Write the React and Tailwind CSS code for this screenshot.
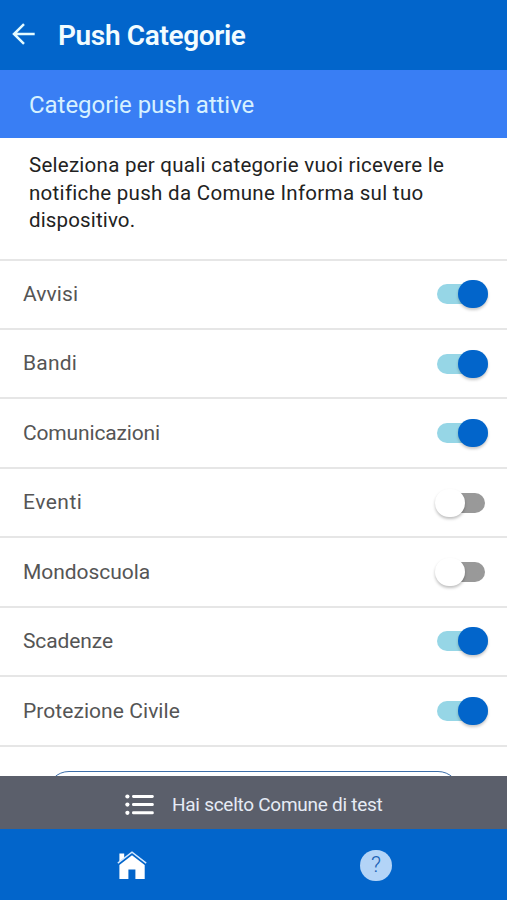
const categories = [
  { name: 'Avvisi', on: true, tracking: 'tracking-[0.1px]' },
  { name: 'Bandi', on: true, tracking: 'tracking-[0.2px]' },
  { name: 'Comunicazioni', on: true, tracking: 'tracking-[-0.15px]' },
  { name: 'Eventi', on: false, tracking: 'tracking-[0.5px]' },
  { name: 'Mondoscuola', on: false, tracking: 'tracking-[-0.05px]' },
  { name: 'Scadenze', on: true, tracking: 'tracking-[-0.1px]' },
  { name: 'Protezione Civile', on: true, tracking: 'tracking-[0.06px]' },
];

function Toggle({ on }) {
  return on ? (
    <span role="switch" aria-checked="true" className="mr-[19px] flex h-5 w-[51px] items-center justify-end rounded-full bg-[#96d6e6]">
      <span className="h-[28px] w-[30px] rounded-full bg-[#0265cb] shadow-[0_2px_3px_rgba(0,0,0,0.22)]" />
    </span>
  ) : (
    <span role="switch" aria-checked="false" className="mr-[22px] flex h-5 w-[50px] items-center rounded-full bg-linear-to-r from-transparent from-40% to-[#999] to-40%">
      <span className="h-[28px] w-[30px] rounded-full bg-white shadow-[0_2px_3px_rgba(0,0,0,0.25)]" />
    </span>
  );
}

function BackArrow() {
  return (
    <svg className="ml-3 h-[22px] w-[24px]" viewBox="0 0 24 22" fill="none" stroke="#e4fbff" strokeWidth="2.5">
      <path d="M12 1.2 2 11l10 9.8M2 11h20.7" />
    </svg>
  );
}

function ListIcon() {
  return (
    <svg className="h-[22px] w-[29px]" viewBox="0 0 29 22" fill="#fff">
      <circle cx="2.4" cy="2.5" r="2.1" />
      <circle cx="2.4" cy="10.6" r="2.1" />
      <circle cx="2.4" cy="18.8" r="2.1" />
      <rect x="7" y="1" width="21.8" height="3" rx="1.4" />
      <rect x="7" y="9.1" width="21.8" height="3" rx="1.4" />
      <rect x="7" y="17.3" width="21.8" height="3" rx="1.4" />
    </svg>
  );
}

function HomeIcon() {
  return (
    <svg className="ml-[117px] h-[29px] w-[30px]" viewBox="0 0 30 29">
      <path fill="#fff" d="M2.4 2.6h4.8v4.2L2.4 10.8zM15 4.2l12.7 9.8V28h-9.3v-9.4h-7V28H2.4V14z" />
      <path fill="none" stroke="#d5e9ff" strokeWidth="1.4" d="M.8 12.1 15 1.2l14.2 10.9" />
    </svg>
  );
}

export default function App() {
  return (
    <div className="flex h-[900px] w-[507px] flex-col overflow-hidden bg-white font-['Roboto','Noto_Sans',sans-serif]">
      <header className="flex h-[70px] shrink-0 items-center bg-[#0265cb] pb-[2px]">
        <BackArrow />
        <h1 className="ml-[22px] pt-[3px] text-[28px] font-semibold leading-none whitespace-nowrap tracking-[-0.36px] text-[#f2fcff]">Push Categorie</h1>
      </header>
      <h2 className="flex h-[68px] shrink-0 items-center bg-[#397ef4] pt-[2px] pl-[29px] text-[24px] whitespace-nowrap tracking-[-0.04px] text-[#d6f1ff]">Categorie push attive</h2>
      <main className="flex h-[638px] shrink-0 flex-col overflow-hidden">
        <p className="h-[120.6px] shrink-0 pt-[14px] pl-[29px] text-[20.5px] leading-[27.5px] whitespace-nowrap text-[#222]">
          <span className="tracking-[0.26px]">Seleziona per quali categorie vuoi ricevere le</span><br />
          <span className="tracking-[0.3px]">notifiche push da Comune Informa sul tuo</span><br />
          <span className="tracking-[0.15px]">dispositivo.</span>
        </p>
        <ul className="flex h-[488px] shrink-0 flex-col border-b-2 border-[#e6e6e6]">
          {categories.map((c) => (
            <li key={c.name} className="flex flex-1 items-center justify-between border-t-2 border-[#e6e6e6] pl-[23px] text-[21px] text-[#555]">
              <span className={`pt-px ${c.tracking}`}>{c.name}</span>
              <Toggle on={c.on} />
            </li>
          ))}
        </ul>
        <button className="mt-[24.4px] ml-[47px] h-[50px] w-[413px] shrink-0 rounded-[22px] border border-[#3d6ea8]" aria-label="Salva" />
      </main>
      <div className="flex h-[53px] shrink-0 items-center bg-[#5b5f6b] pl-[125px] pt-[4px]">
        <ListIcon />
        <span className="ml-[18px] pt-px text-[19px] whitespace-nowrap tracking-[-0.27px] text-[#e6ebf5]">Hai scelto Comune di test</span>
      </div>
      <nav className="flex flex-1 items-center bg-[#0265cb] pt-px">
        <HomeIcon />
        <span className="ml-[213px] flex h-[31px] w-[32px] items-center justify-center rounded-full bg-[#b3d4f7] text-[22px] font-light leading-none text-[#1c62b5]">?</span>
      </nav>
    </div>
  );
}
